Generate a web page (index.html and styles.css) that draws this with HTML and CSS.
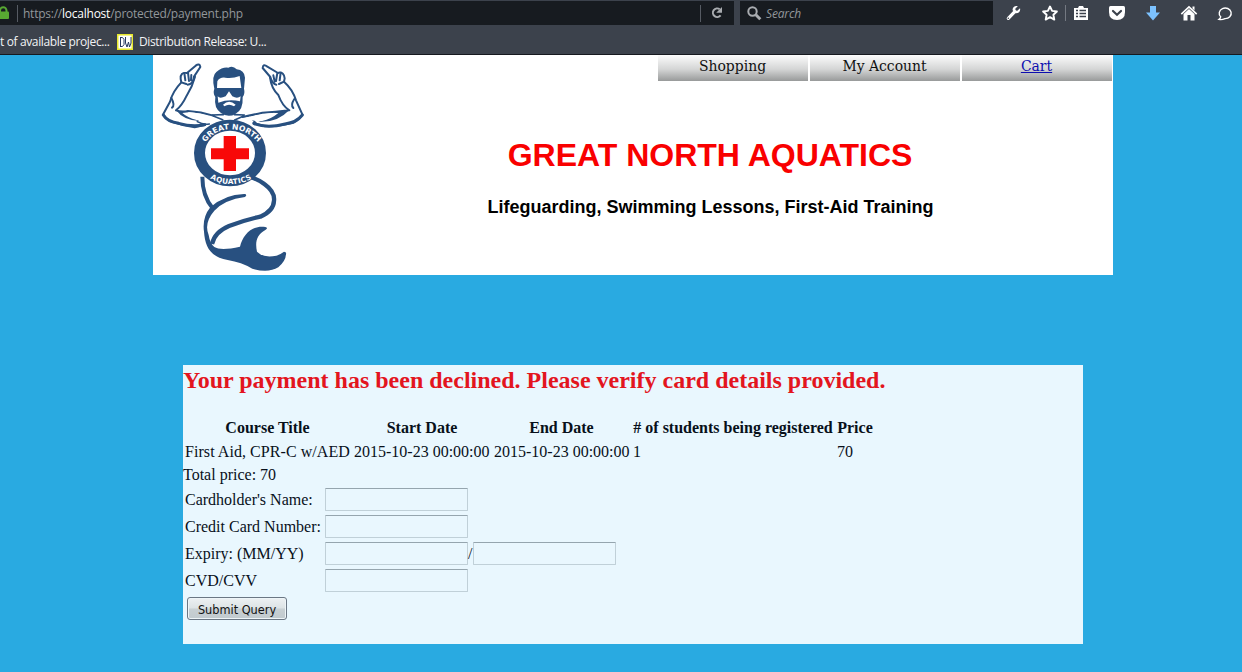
FILE: index.html
```html
<!DOCTYPE html>
<html lang="en">
<head>
<meta charset="utf-8">
<title>Great North Aquatics</title>
<link rel="stylesheet" href="styles.css">
</head>
<body>
<div class="chrome">
  <div class="toolbar">
    <div class="address">
      <svg class="lock" width="9" height="14" viewBox="0 0 9 14"><path d="M0 6V4.500a3.200 3.200 0 0 1 6.500 0V6" fill="none" stroke="#58a832" stroke-width="2"/><rect x="-5" y="5.500" width="14" height="7.500" rx="1" fill="#58a832"/></svg>
      <span class="sep"></span>
      <span class="url">https://<b>localhost</b>/protected/payment.php</span>
      <span class="sep"></span>
      <svg class="reload" width="14" height="14" viewBox="0 0 14 14"><path d="M9.7 3.2A4.3 4.3 0 1 0 10.6 9.4" fill="none" stroke="#a9acb0" stroke-width="2"/><path d="M12 1v5.8H6.2z" fill="#a9acb0"/></svg>
    </div>
    <div class="search">
      <svg width="15" height="15" viewBox="0 0 15 15" fill="none" stroke="#a9acb0"><circle cx="5.5" cy="5.5" r="4.2" stroke-width="2"/><path d="M8.8 8.8l4.5 4.5" stroke-width="3"/></svg>
      <span>Search</span>
    </div>
    <svg class="tools" width="249" height="27" viewBox="0 0 249 27">
      <path d="M15.3 18.3l6.5-6.6" stroke="#fff" stroke-width="3.2" stroke-linecap="round"/>
      <path d="M24.9 6.1l-2.6 2.7.3 1.7 1.7.3 2.7-2.6c.8 2.8-1.3 5.4-4.4 5l-3-3c-.4-3.1 2.500-5 5.300-4.100z" fill="#fff"/><circle cx="15.300" cy="18.200" r=".8" fill="#3c424c"/>
      <path d="M57 6.500l2.100 4.400 4.800.6-3.500 3.300.9 4.800-4.300-2.400-4.300 2.400.9-4.800-3.500-3.300 4.800-.6z" fill="none" stroke="#fff" stroke-width="1.900" stroke-linejoin="round"/>
      <path d="M72.500 5v16" stroke="#747982"/>
      <path d="M81 8h4l1-2h4l1 2h4v12H81z" fill="#fff"/><path d="M83 10.500h2M86.500 10.500H93M83 13.500h2M86.500 13.500H93M83 16.500h2M86.500 16.500H93" stroke="#3c424c" stroke-width="1.300"/>
      <path d="M116 7.500q0-1.500 1.500-1.500h13q1.500 0 1.500 1.500V12q0 8-8 8t-8-8z" fill="#fff"/><path d="M120 11l4 3.700 4-3.700" fill="none" stroke="#3c424c" stroke-width="2.200" stroke-linecap="round"/>
      <path d="M157 6h6v6.500h4L160 20.500l-7-8h4z" fill="#7cc2ff"/>
      <path d="M188.300 14.200l7.700-7.200 7.700 7.200" fill="none" stroke="#fff" stroke-width="1.700"/><path d="M190.500 14l5.500-5 5.500 5v6.500h-4V15h-3v5.500h-4zM199.500 6.500h2v4l-2-2z" fill="#fff"/>
      <path d="M227.700 16.800A6 5.300 0 1 1 232 18.600Q229 20 226 19.400Q227.600 18.300 227.700 16.800z" fill="none" stroke="#fff" stroke-width="1.400"/>
    </svg>
  </div>
  <div class="bookmarks"><span class="bm-first">t of available projec...</span>
    <svg width="16" height="16" viewBox="0 0 16 16"><path d="M0 0h16v16H0z" fill="#e7e82d"/><path d="M1.500 1.500h13v13h-13z" fill="#fff"/><path d="M3.500 3v10M3.500 3.500h2l1.500 2v5l-1.500 2h-2M8.500 3v6l1.500 4 1.500-5 1 5 1.500-4V3" fill="none" stroke="#26385e"/></svg>
    <span class="bm-second">Distribution Release: U...</span></div>
</div>
<header class="banner">
  <svg class="logo" width="160" height="220" viewBox="0 0 480 660">
    <g fill="none" stroke="#285080" stroke-width="6" stroke-linejoin="round" stroke-linecap="round">
      <path d="M135 65Q127 95 110 122Q96 152 78 166Q94 172 114 168Q153 170 190 182" />
      <path d="M111 54Q90 51 92 72L94 82Q68 109 60 140L40 177Q43 190 62 199Q94 211 134 217L166 209"/>
      <path d="M111 54L137 32Q149 23 151 36L132 65Q130 88 113 89M103 54L106 76M114 53L117 78M124 60L123 76M94 82L109 87M64 129Q76 151 66 158"/>
      <path d="M360 67Q364 100 385 120Q397 153 418 166Q376 171 337 173Q303 181 278 186" />
      <path d="M386 53Q402 51 404 70L402 80Q428 103 438 136L457 178Q450 192 431 203Q386 214 345 214L310 204"/>
      <path d="M384 54L352 35Q339 25 338 39L361 66Q366 86 379 89M392 53L389 76M382 54L378 78M370 61L374 80M402 80L387 87M433 132Q421 150 430 159"/>
      <path d="M190 183L218 194M281 183L254 195M187 180L220 179M253 179L283 180M142 200Q158 210 178 207M302 187L320 207" stroke-width="5"/>
      <path d="M40 180Q52 200 86 205Q128 217 164 209M457 180Q440 202 405 207Q352 221 312 206" stroke-width="9"/>
    </g>
    <path d="M78 165Q90 173 112 169Q122 185 148 198Q100 196 78 165zM418 165Q395 172 375 170Q365 188 325 200Q382 204 418 165z" fill="#285080"/>
    <path d="M97 174Q112 188 140 195L170 194L186 187Q150 173 116 172zM385 174Q364 192 336 198L300 196L286 188Q330 178 365 174z" fill="#fff"/>
    <path d="M193 101Q184 62 199 51Q218 35 235 38Q249 31 260 43Q283 45 285 68L282 101Q286 116 278 126Q280 165 257 176Q235 190 213 174Q191 159 196 126Q188 115 193 101z" fill="#285080"/>
    <path d="M201 99L202 79Q209 66 226 68Q248 71 269 63L274 99zM203 124Q209 132 227 124L237 109L247 124Q262 132 272 124L270 139Q237 131 205 143z" fill="#fff"/>
    <path d="M219 149Q237 132 257 149L252 154Q237 145 223 154z" fill="#fff"/><path d="M225 154Q237 150 250 154L243 160h-11z" fill="#285080"/>
    <path d="M157 365Q157 422 188 460" fill="none" stroke="#285080" stroke-width="12"/>
    <path d="M302 366Q326 374 343 387Q375 410 372 437Q371 468 331 485Q287 494 237 513Q194 531 186 567" fill="none" stroke="#285080" stroke-width="13"/>
    <path d="M286 417Q292 421 285 426Q224 434 193 467Q161 504 176 540Q180 566 193 576Q213 588 270 575C279 540 305 510 346 516Q356 519 346 525C319 540 315 563 321 590Q340 610 379 602Q392 598 402 590Q410 590 408 598Q407 618 385 637Q354 655 307 641Q275 622 233 615C180 606 165 573 162 530Q156 488 181 457Q225 418 282 417z" fill="#285080"/>
    <ellipse cx="240" cy="294" rx="91.500" ry="83.500" fill="#fff" stroke="#285080" stroke-width="33"/>
    <path d="M221 243h37v37h39v33h-39v35h-37v-35h-38v-33h38z" fill="#f80808"/>
    <defs><path id="arcTop" d="M158 274Q188 223 242 223T333 274"/><path id="arcBottom" d="M172 366Q243 409 314 366"/></defs>
    <text class="seal"><textPath href="#arcTop" startOffset="50%" text-anchor="middle">GREAT NORTH</textPath></text>
    <text class="seal seal-low"><textPath href="#arcBottom" startOffset="50%" text-anchor="middle">AQUATICS</textPath></text>
  </svg>
  <div class="banner-main">
    <nav class="menu"><span>Shopping</span><span>My Account</span><span><a href="#">Cart</a></span></nav>
    <h1>GREAT NORTH AQUATICS</h1>
    <h3>Lifeguarding, Swimming Lessons, First-Aid Training</h3>
  </div>
</header>
<main class="content">
  <h2>Your payment has been declined. Please verify card details provided.</h2>
  <table class="courses">
    <colgroup><col class="c1"><col class="c2"><col class="c3"><col class="c4"><col class="c5"></colgroup>
    <tr><th>Course Title</th><th>Start Date</th><th>End Date</th><th># of students being registered</th><th>Price</th></tr>
    <tr><td class="course">First Aid, CPR-C w/AED</td><td>2015-10-23 00:00:00</td><td>2015-10-23 00:00:00</td><td>1</td><td>70</td></tr>
  </table>
  <div class="total">Total price: 70</div>
  <form class="payment">
    <label>Cardholder's Name:</label><div><input type="text"></div>
    <label>Credit Card Number:</label><div><input type="text"></div>
    <label>Expiry: (MM/YY)</label><div><input type="text"><i>/</i><input type="text"></div>
    <label>CVD/CVV</label><div><input type="text"></div>
    <button type="button">Submit Query</button>
  </form>
</main>
</body>
</html>
```
FILE: styles.css
```css
* { box-sizing: border-box; }
body { margin: 0; height: 672px; overflow: hidden; background: #29aae1; color: #08101a; font: 16px/18px "Liberation Serif", serif; }
.chrome { height: 55px; background: #3c424c; border-bottom: 1px solid #16191f; font: 12px/16px "Open Sans", sans-serif; color: #f2f3f4; }
.toolbar { display: flex; height: 27px; }
.address, .search { display: flex; align-items: center; height: 24px; margin-top: 1px; background: #171b20; }
.address { width: 734px; }
.lock { margin-right: 8px; }
.sep { width: 1px; height: 17px; background: #565b63; }
.url { width: 677px; padding: 2px 0 0 5px; margin-right: 5px; color: #92969a; letter-spacing: -.24px; }
.url b { color: #fff; font-weight: 400; }
.reload { margin-left: 9px; }
.search { width: 253px; margin-left: 6px; padding-left: 7px; gap: 4px; color: #92969a; font-style: italic; }
.search span { padding-top: 1px; letter-spacing: -.15px; }
.tools { flex: none; }
.bookmarks { display: flex; align-items: center; height: 27px; padding-top: 2px; white-space: nowrap; letter-spacing: -.37px; }
.bookmarks svg { margin-right: 6px; }
.bm-first { width: 117px; flex: none; }
.banner { display: flex; width: 960px; height: 220px; margin-left: 153px; background: #fff; }
.logo { flex: none; margin-left: -3px; clip-path: inset(0 0 0 3px); }
.seal { font: bold 23px "DejaVu Sans", sans-serif; fill: #fff; }
.seal-low { font-size: 22px; letter-spacing: 1px; }
.banner-main { flex: 1; font-family: "Liberation Sans", sans-serif; text-align: center; }
.menu { display: flex; gap: 2px; margin-left: 348px; font: 15.5px/22px "DejaVu Serif Condensed", "DejaVu Serif", serif; }
.menu span { width: 150px; height: 26px; padding-right: 1px; background: linear-gradient(#fcfcfc, #d4d5d5 55%, #989a9a); color: #111; }
.menu a { color: #0d0daf; }
h1 { margin: 55px 0 0 -3px; font-size: 32px; line-height: 38px; color: #f90000; }
h3 { margin: 23px 0 0 -2px; font-size: 18px; line-height: 20px; color: #000; }
.content { width: 900px; height: 279px; margin: 90px 0 0 183px; background: #e9f7fe; }
h2 { margin: 0; padding-top: 2px; height: 51px; font-size: 24px; line-height: 27px; color: #e3151e; white-space: nowrap; }
.courses { table-layout: fixed; width: 692px; border-collapse: collapse; white-space: nowrap; }
.courses th, .courses td { height: 24px; padding: 0 2px; text-align: left; }
.courses th { text-align: center; }
.course { letter-spacing: .06px; }
.c1 { width: 169px; } .c2 { width: 140px; } .c3 { width: 139px; } .c4 { width: 204px; } .c5 { width: 40px; }
.total { height: 24px; line-height: 22px; }
.payment { display: grid; grid-template-columns: 140px auto; grid-auto-rows: 27px; padding-left: 2px; }
.payment label { line-height: 24px; }
.payment div { display: flex; }
.payment i { width: 5px; line-height: 24px; font-style: normal; }
.payment input { width: 143px; height: 23px; border: 1px solid #c0d0d8; border-top-color: #95a5ae; border-radius: 1px; background: #e9f7fe; }
.payment button { width: 100px; height: 23px; margin: 1px 0 0 2px; padding: 2px 0 0; border: 1px solid #6b7784; border-radius: 3px; background: linear-gradient(#edf1f3, #dde3e5 48%, #c8d0d3 52%, #c1cace); box-shadow: inset 0 0 0 1px #eef5f8; color: #111; font: 12.6px "DejaVu Sans Condensed", "DejaVu Sans", sans-serif; }
```
